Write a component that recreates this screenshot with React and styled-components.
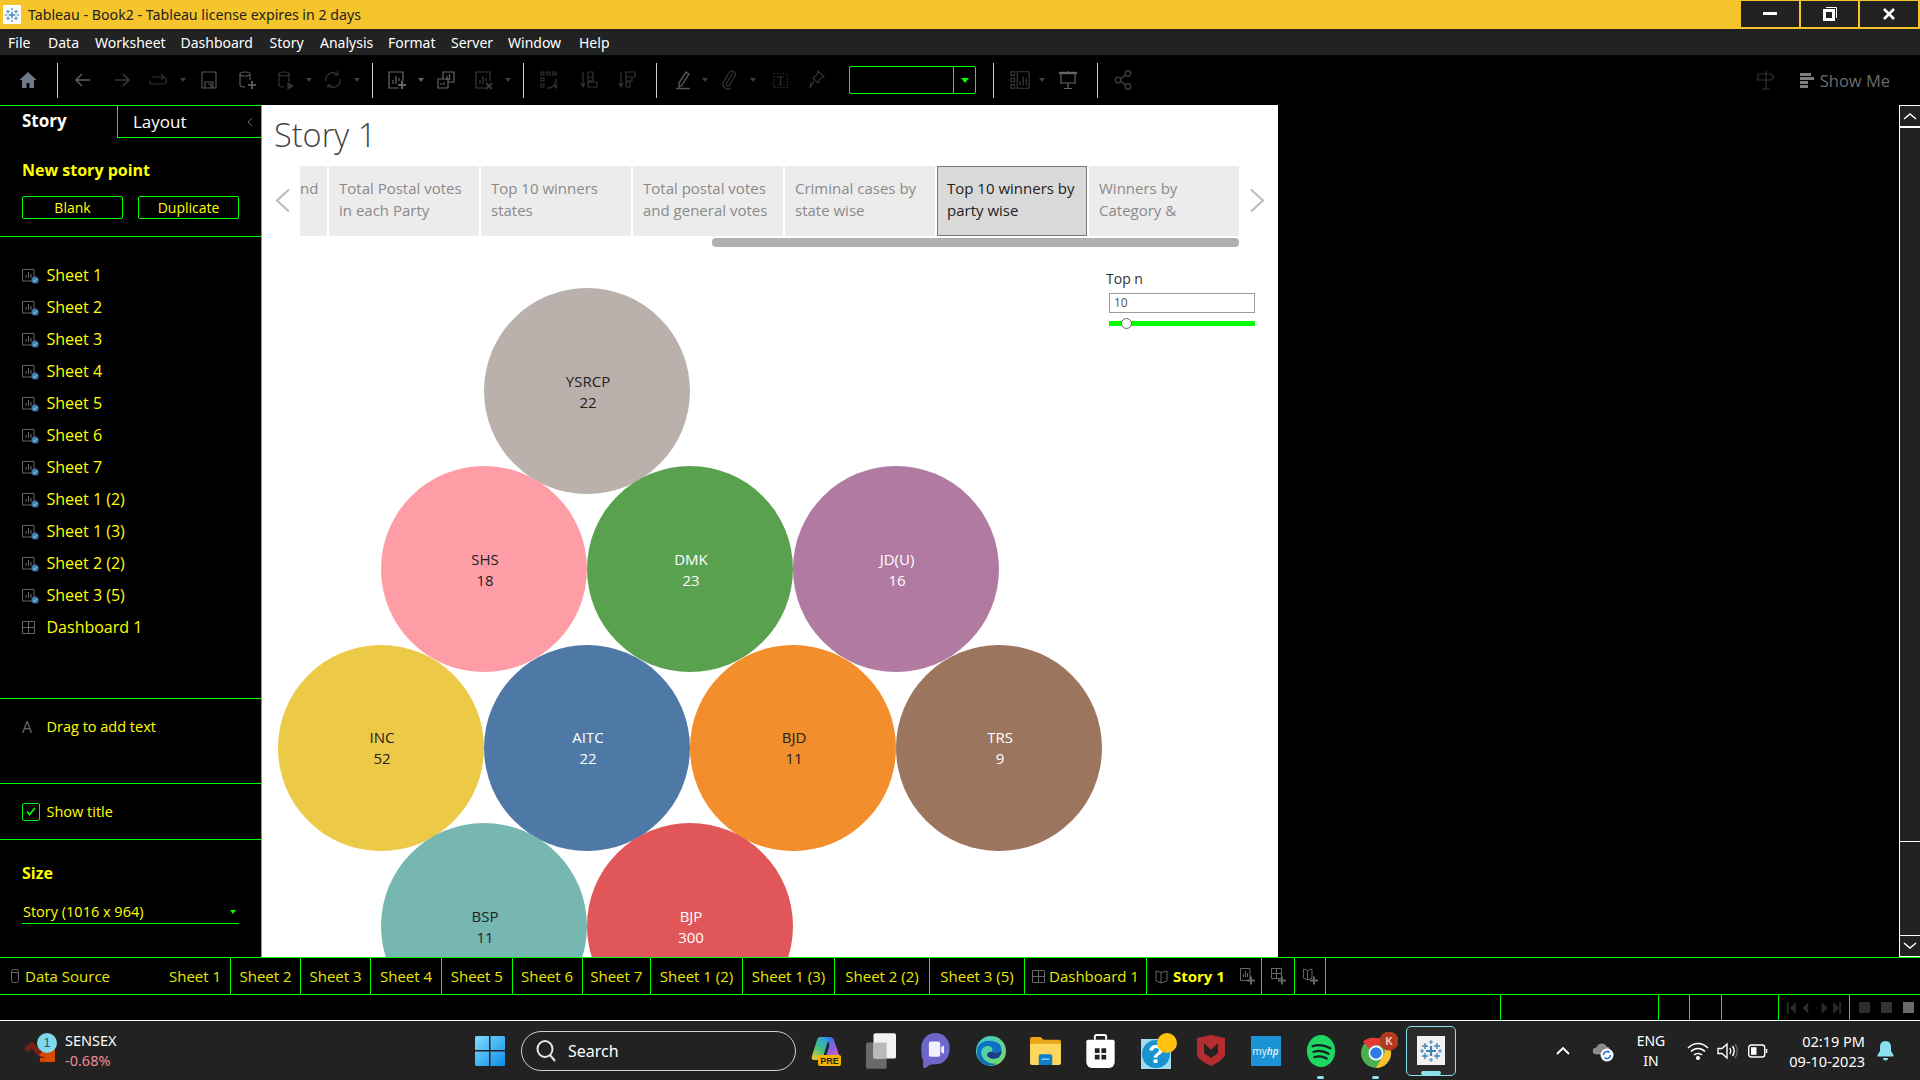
import styled, { createGlobalStyle } from "styled-components";

const GREEN = "#00ff00";
const YELLOW = "#ffff00";
const WIN_FONT = `"Noto Sans", "Open Sans", sans-serif`;
const TAB_FONT = `"Open Sans", "Noto Sans", sans-serif`;

const GlobalStyle = createGlobalStyle`
  html, body { margin: 0; padding: 0; background: #000; overflow: hidden; }
  * { box-sizing: border-box; }
`;

/* ---------- small drawings ---------- */
const Svg = ({ s = 20, vb = "0 0 20 20", children, ...rest }) => (
  <svg width={s} height={s} viewBox={vb} fill="none" stroke="currentColor" strokeWidth="1.2" {...rest}>
    {children}
  </svg>
);

const TableauMark = ({ s = 18 }) => (
  <svg width={s} height={s} viewBox="0 0 24 24" stroke="#3f86b8" strokeWidth="1.4">
    <path d="M12 7v10M7 12h10" strokeWidth="2.2" />
    <path d="M6 4v6M3 7h6M18 4v6M15 7h6M6 14v6M3 17h6M18 14v6M15 17h6" />
    <path d="M12 1v4M10 3h4M12 19v4M10 21h4M1 12h4M3 10v4M19 12h4M21 10v4" strokeWidth="1" />
  </svg>
);

const Home = () => (
  <svg width="20" height="20" viewBox="0 0 20 20" fill="currentColor">
    <path d="M10 2 1.5 10H4v8h4.5v-5h3v5H16v-8h2.5z" />
  </svg>
);
const Back = () => <Svg><path d="M17 10H3M9 4l-6 6 6 6" strokeWidth="1.6" /></Svg>;
const Forward = () => <Svg><path d="M3 10h14M11 4l6 6-6 6" strokeWidth="1.6" /></Svg>;
const Swap = () => <Svg><path d="M4 7h11a3 3 0 0 1 0 7H4a2 2 0 0 1-2-3M13 4l3 3-3 3" /></Svg>;
const Save = () => <Svg><path d="M3 2h14v16H3zM6 18v-6h8v6M9 14h3v4" /></Svg>;
const DataAdd = () => (
  <Svg>
    <ellipse cx="8" cy="4" rx="5" ry="2" />
    <path d="M3 4v11c0 1 2 2 5 2M13 4v6" />
    <path d="M11 15h8M15 11v8" strokeWidth="2" />
  </Svg>
);
const DataPause = () => (
  <Svg>
    <ellipse cx="8" cy="4" rx="5" ry="2" />
    <path d="M3 4v11c0 1 2 2 5 2M13 4v8" />
    <path d="M12 13l5 3-5 3z" fill="currentColor" />
  </Svg>
);
const Refresh = () => <Svg><path d="M3 11a7 7 0 0 1 12-6M17 9a7 7 0 0 1-12 6M15 1v4h-4M5 19v-4h4" /></Svg>;
const SheetAdd = () => (
  <Svg>
    <path d="M12 18H2V2h14v9M6 14V10M9 14V6M12 11V8" />
    <path d="M11 15h8M15 11v8" strokeWidth="2" />
  </Svg>
);
const Duplicate = () => (
  <Svg>
    <path d="M7 9V2h11v10h-6M2 9h10v9H2zM11 10V6M13.500 10V4M5 15v-2M8 15v-3" />
  </Svg>
);
const SheetClear = () => (
  <Svg>
    <path d="M12 18H2V2h14v9M6 14V10M9 14V6M12 11V8" />
    <path d="M12 13l6 6M18 13l-6 6" strokeWidth="1.8" />
  </Svg>
);
const Cycle = () => (
  <Svg>
    <path d="M2 2h3v3H2zM8 2h3v3H8zM14 2h3v3h-3zM2 8h3v3H2zM2 14h3v3H2zM8 18a8 8 0 0 0 9-9M15 15l2 3 1-4" />
  </Svg>
);
const SortAsc = () => (
  <Svg>
    <path d="M4 2v14M2 13l2 4 2-4M9 2h5v5H9zM9 7h5v4H9zM9 12h9v5H9z" />
  </Svg>
);
const SortDesc = () => (
  <Svg>
    <path d="M4 2v14M2 13l2 4 2-4M9 2h9v5H9zM9 7h6v4H9zM9 12h4v5H9z" />
  </Svg>
);
const Pen = () => (
  <Svg>
    <path d="M6 13 13 2l3 2-7 11-3 2zM3 18.500h14" strokeWidth="1.4" />
  </Svg>
);
const Clip = () => <Svg><path d="M14 3 7 14a2 2 0 0 0 3 2l6-10a3.500 3.500 0 0 0-6-3.500L4 13a5 5 0 0 0 8 5" /></Svg>;
const TextBox = () => (
  <Svg s={17} vb="0 0 20 20">
    <path d="M2 2h16v16H2z" strokeDasharray="2 1.500" />
    <path d="M6 6h8M10 6v9M8 15h4" />
  </Svg>
);
const Pin = () => <Svg><path d="M11 1l6 6-3 1-3 5-5-5 4-3zM7 11l-4 7 1-6" /></Svg>;
const Cards = () => (
  <Svg s={20} vb="0 0 22 20">
    <path d="M1 1h4v4H1zM1 8h4v4H1zM1 15h4v4H1zM8 1h13v18H8zM11 16v-5M14.500 16V6M18 16v-8" />
  </Svg>
);
const Present = () => (
  <Svg>
    <path d="M1 3h18" strokeWidth="2.400" />
    <path d="M3 3v10h14V3M10 1v2M10 13v5M6 18.500h8" />
  </Svg>
);
const Share = () => (
  <Svg>
    <circle cx="4" cy="10" r="2.800" />
    <circle cx="14" cy="3.500" r="2.800" />
    <circle cx="14" cy="16.500" r="2.800" />
    <path d="M6.500 8.500 12 5M6.500 11.500 12 15" />
  </Svg>
);
const Signpost = () => (
  <Svg>
    <path d="M10 1v18M6 19h8M2 4h13l3 3-3 3H2z" />
  </Svg>
);

const SheetIcon = () => (
  <SheetIconBox>
    <svg width="16" height="16" viewBox="0 0 16 16" fill="none" stroke="#666" strokeWidth="1">
      <path d="M.5 1.500h11.500v11.500H.5zM4 10V7M6.500 10V4M9 10V6" />
    </svg>
    <svg width="8" height="8" viewBox="0 0 8 8">
      <circle cx="4" cy="4" r="3.600" fill="#3a7ca5" />
      <path d="M2.300 4l1.200 1.200 2.200-2.200" stroke="#cfe" strokeWidth=".8" fill="none" />
    </svg>
  </SheetIconBox>
);
const GridIcon = ({ s = 13 }) => (
  <svg width={s} height={s} viewBox="0 0 13 13" fill="none" stroke="#666" strokeWidth="1">
    <path d="M.5.500h12v12H.5zM6.500.500v12M.5 6.500h12" />
  </svg>
);
const BookIcon = () => (
  <svg width="13" height="15" viewBox="0 0 13 15" fill="none" stroke="#666" strokeWidth="1">
    <path d="M1 2l5 1.500L12 2v10l-6 2-5-2zM6 3.500V14" />
  </svg>
);

/* taskbar pictures */
const StartLogo = () => (
  <svg width="30" height="30" viewBox="0 0 30 30">
    <defs>
      <linearGradient id="st" x1="0" y1="0" x2="1" y2="1">
        <stop offset="0" stopColor="#7fdcff" />
        <stop offset="1" stopColor="#0f8de8" />
      </linearGradient>
    </defs>
    <path d="M0 1.500A1.500 1.500 0 0 1 1.500 0H14v14H0zM15.500 0H28.500A1.500 1.500 0 0 1 30 1.500V14H15.500zM0 15.500h14V30H1.500A1.500 1.500 0 0 1 0 28.500zM15.500 15.500H30v13a1.500 1.500 0 0 1-1.500 1.500H15.500z" fill="url(#st)" />
  </svg>
);
const Copilot = () => (
  <svg width="30" height="30" viewBox="0 0 30 30">
    <defs>
      <linearGradient id="cpl" x1="0.8" y1="0" x2="0.2" y2="1">
        <stop offset="0" stopColor="#2f9be8" />
        <stop offset=".5" stopColor="#3fc08a" />
        <stop offset="1" stopColor="#e8c92f" />
      </linearGradient>
      <linearGradient id="cpr" x1="0.3" y1="0" x2="0.7" y2="1">
        <stop offset="0" stopColor="#2f7fe8" />
        <stop offset=".5" stopColor="#8a5fe0" />
        <stop offset="1" stopColor="#e85fc4" />
      </linearGradient>
    </defs>
    <path d="M9 1h6c2 0 3 1 2 4l-5 16c-1 2-2 3-4 3H3c-2 0-3-2-2-4L6 4c.6-2 1.500-3 3-3z" fill="url(#cpl)" />
    <path d="M14 1h5c2 0 3 1 4 3l5 15c1 3-1 5-3 5h-8c-2 0-3-2-2-4l3-9c.6-2 .6-3-.5-5-.8-2-2-3-3.500-5z" fill="url(#cpr)" />
    <rect x="7" y="19" width="23" height="11" rx="2" fill="#f7b500" />
    <text x="18.500" y="28" fontSize="9" fontWeight="700" fontFamily="Liberation Sans" textAnchor="middle" fill="#222">PRE</text>
  </svg>
);
const Stack = () => (
  <svg width="30" height="36" viewBox="0 0 32 38">
    <rect x="0" y="10" width="22" height="28" rx="2" fill="#6a6a6a" />
    <rect x="8" y="0" width="24" height="27" rx="2" fill="#f2f2f2" />
    <rect x="8" y="10" width="14" height="17" fill="#b9b9b9" />
  </svg>
);
const MeetIcon = () => (
  <svg width="29" height="36" viewBox="0 0 30 38">
    <path d="M15 0c8 0 15 6 15 16s-6 17-15 17c-3 0-6 0-8 2-2 2-5 3-5 0v-6C0 25 0 21 0 16 0 6 7 0 15 0z" fill="#6f66c9" />
    <path d="M8 11a2 2 0 0 1 2-2h8a2 2 0 0 1 2 2v12a2 2 0 0 1-2 2h-8a2 2 0 0 1-2-2zM21 15l3-2v9l-3-2z" fill="#f3f1ff" />
  </svg>
);
const EdgeIcon = () => (
  <svg width="30" height="30" viewBox="0 0 32 38" preserveAspectRatio="none">
    <defs>
      <linearGradient id="eg" x1="0" y1="0" x2="1" y2="1">
        <stop offset="0" stopColor="#39c7d6" />
        <stop offset="1" stopColor="#7cdc5f" />
      </linearGradient>
    </defs>
    <ellipse cx="16" cy="19" rx="16" ry="19" fill="url(#eg)" />
    <path d="M1 20C1 10 8 6 14 6c8 0 14 5 13 11-1 4-7 5-10 3 2-5-2-8-6-7-5 1-7 8-4 14 2 5 8 9 15 8-3 2-7 3-10 2C6 36 1 29 1 20z" fill="#0f6fc4" />
    <path d="M17 20c3 2 9 1 10-3 1 5-1 9-4 11-4 2-9 1-11-3-1-3 2-6 5-5z" fill="#1b3f8b" />
  </svg>
);
const FolderIcon = () => (
  <svg width="31" height="29" viewBox="0 0 32 30">
    <path d="M0 3a2 2 0 0 1 2-2h9l3 3h16a2 2 0 0 1 2 2v5H0z" fill="#e9a516" />
    <path d="M0 8h32v20a2 2 0 0 1-2 2H2a2 2 0 0 1-2-2z" fill="#ffd75e" />
    <path d="M9 21a2 2 0 0 1 2-2h10a2 2 0 0 1 2 2v9H9z" fill="#0f7fc9" />
    <path d="M12 24h8" stroke="#8fd0f5" strokeWidth="1.500" />
  </svg>
);
const StoreIcon = () => (
  <svg width="29" height="34" viewBox="0 0 30 36">
    <path d="M9 6V3a2 2 0 0 1 2-2h8a2 2 0 0 1 2 2v3" fill="none" stroke="#fff" strokeWidth="2" />
    <path d="M0 8a2 2 0 0 1 2-2h26a2 2 0 0 1 2 2v22a6 6 0 0 1-6 6H6a6 6 0 0 1-6-6z" fill="#fff" />
    <path d="M9 15h5v5H9zM16 15h5v5h-5zM9 22h5v5H9zM16 22h5v5h-5z" fill="#222" />
  </svg>
);
const HelpIcon = () => (
  <svg width="47" height="36" viewBox="-9 0 47 36">
    <rect x="0" y="6" width="30" height="30" fill="#9fdcf0" />
    <circle cx="15" cy="21" r="14" fill="#1994cf" />
    <text x="15" y="30" fontSize="26" fontWeight="700" fontFamily="Liberation Sans" textAnchor="middle" fill="#fff">?</text>
    <ellipse cx="26" cy="10" rx="10" ry="10" fill="#ffc20e" />
  </svg>
);
const McAfee = () => (
  <svg width="28" height="31" viewBox="0 0 28 31">
    <path d="M0 3 14 0l14 3v17c0 3-9 9-14 11C9 29 0 23 0 20z" fill="#b52d2f" />
    <path d="M7 8l7 7 7-7v10l-7 5-7-5z" fill="#222" />
  </svg>
);
const MyHp = () => (
  <MyHpBox>
    my<em>hp</em>
  </MyHpBox>
);
const Spotify = () => (
  <svg width="30" height="32" viewBox="0 0 30 34">
    <ellipse cx="15" cy="17" rx="15" ry="17" fill="#1ed760" />
    <path d="M6 12c6-2 13-1 19 2M7 18c5-2 11-1 16 2M8 23.500c4-1 9-1 13 1.500" stroke="#122" strokeWidth="2.400" fill="none" strokeLinecap="round" />
  </svg>
);
const Chrome = () => (
  <svg width="45.5" height="38" viewBox="-8 0 45.5 38">
    <circle cx="15" cy="21" r="15" fill="#4caf50" />
    <path d="M15 6a15 15 0 0 1 13 7.500H15a7.500 7.500 0 0 0-6.500 3.800L2 9.500A15 15 0 0 1 15 6z" fill="#e53935" />
    <path d="M28 13.500A15 15 0 0 1 15 36l6.500-11.300a7.500 7.500 0 0 0 0-11.200z" fill="#fbc02d" />
    <circle cx="15" cy="21" r="7.500" fill="#fff" />
    <circle cx="15" cy="21" r="5.800" fill="#2f7be5" />
    <circle cx="28" cy="9" r="9.500" fill="#b5391f" />
    <text x="28" y="12.500" fontSize="10" fontWeight="700" fontFamily="Liberation Sans" textAnchor="middle" fill="#f3d5c8">K</text>
  </svg>
);
const SensexIcon = () => (
  <svg width="34" height="36" viewBox="0 0 34 36">
    <path d="M1 17l6-5 9 10 5-4v-4" stroke="#7a2116" strokeWidth="5" fill="none" />
    <path d="M14 22l8-8 8 0v15H15v-4h5z" fill="#d94a00" />
    <circle cx="22" cy="10" r="10" fill="#7fd8ec" />
    <text x="22" y="14" fontSize="12" fontFamily="Liberation Sans" textAnchor="middle" fill="#27505c">1</text>
  </svg>
);
const CloudSync = () => (
  <svg width="24" height="22" viewBox="0 0 24 22">
    <path d="M5 15a4 4 0 0 1 0-8 6 6 0 0 1 11-1 4 4 0 0 1 2 7v2z" fill="#8a8a8a" stroke="#111" />
    <circle cx="16" cy="15" r="6.500" fill="#fff" />
    <path d="M12.500 15a3.500 3.500 0 0 1 6-2.500M19.500 15a3.500 3.500 0 0 1-6 2.500" stroke="#1b74d6" strokeWidth="1.600" fill="none" />
  </svg>
);

/* ---------- data ---------- */
const menus = [
  ["File", 8], ["Data", 48], ["Worksheet", 95], ["Dashboard", 180.5], ["Story", 269.5],
  ["Analysis", 320], ["Format", 388], ["Server", 451], ["Window", 508], ["Help", 579],
];

const Caret = () => <CaretMark />;
const Sep = () => <ToolSep />;
const Combo = () => (
  <ComboBox>
    <ComboValue />
    <ComboArrow><CaretMark $color={GREEN} $size={4} /></ComboArrow>
  </ComboBox>
);

const toolCentres = [
  [28, Home, "#6e7a88"], [57, Sep], [83, Back, "#5c5c5c"], [122, Forward, "#3a3a3a"], [158, Swap, "#333"],
  [183, Caret, "#3f3f3f"], [208.5, Save, "#555"], [247, DataAdd, "#555"], [286, DataPause, "#333"],
  [309, Caret, "#3f3f3f"], [332.5, Refresh, "#333"], [357, Caret, "#3f3f3f"], [372, Sep], [397, SheetAdd, "#666"],
  [421, Caret, "#666"], [446, Duplicate, "#666"], [484, SheetClear, "#3a3a3a"], [508, Caret, "#3f3f3f"], [523, Sep],
  [549, Cycle, "#333"], [589, SortAsc, "#333"], [627, SortDesc, "#333"], [656, Sep], [683, Pen, "#555"],
  [704.5, Caret, "#3f3f3f"], [729, Clip, "#333"], [753, Caret, "#3f3f3f"], [780, TextBox, "#333"], [817, Pin, "#333"],
  [912.5, Combo], [993, Sep], [1020, Cards, "#3f3f3f"], [1041.5, Caret, "#3f3f3f"], [1068, Present, "#666"],
  [1097, Sep], [1124, Share, "#444"],
];

// every slot is symmetric round its centre, the rest of the distance goes in a margin
let toolEdge = 0;
const tools = toolCentres.map(([c, Icon, color], i) => {
  const prev = i ? toolCentres[i - 1][0] : 0;
  const next = toolCentres[i + 1] ? toolCentres[i + 1][0] : c + 20;
  const half = Math.min(c - prev, next - c) / 2;
  const ml = c - half - toolEdge;
  toolEdge = c + half;
  return { Icon, color, w: half * 2, ml };
});

const storyPoints = [
  { text: "nd", w: 27, pad: 0 },
  { text: "Total Postal votes\nin each Party" },
  { text: "Top 10 winners\nstates" },
  { text: "Total postal votes\nand general votes" },
  { text: "Criminal cases by\nstate wise" },
  { text: "Top 10 winners by\nparty wise", active: true },
  { text: "Winners by\nCategory &" },
];

const sheets = ["Sheet 1", "Sheet 2", "Sheet 3", "Sheet 4", "Sheet 5", "Sheet 6", "Sheet 7", "Sheet 1 (2)", "Sheet 1 (3)", "Sheet 2 (2)", "Sheet 3 (5)"];

const bubbles = [
  { name: "YSRCP", value: 22, x: 222, y: 41, color: "#bab0ac", dark: true },
  { name: "SHS", value: 18, x: 119, y: 219, color: "#ff9da7", dark: true },
  { name: "DMK", value: 23, x: 325, y: 219, color: "#59a14f" },
  { name: "JD(U)", value: 16, x: 531, y: 219, color: "#b07aa1" },
  { name: "INC", value: 52, x: 16, y: 397.5, color: "#edc948", dark: true },
  { name: "AITC", value: 22, x: 222, y: 397.5, color: "#4e79a7" },
  { name: "BJD", value: 11, x: 428, y: 397.5, color: "#f28e2b", dark: true },
  { name: "TRS", value: 9, x: 634, y: 397.5, color: "#9c755f" },
  { name: "BSP", value: 11, x: 119, y: 576, color: "#76b7b2", dark: true },
  { name: "BJP", value: 300, x: 325, y: 576, color: "#e15759" },
];

const tabs = [
  ["Sheet 1", 71], ["Sheet 2", 70], ["Sheet 3", 70], ["Sheet 4", 71], ["Sheet 5", 70.5], ["Sheet 6", 70], ["Sheet 7", 68.5],
  ["Sheet 1 (2)", 92], ["Sheet 1 (3)", 92], ["Sheet 2 (2)", 95], ["Sheet 3 (5)", 95],
];

const statusCells = [1501, 158, 31, 32, 57];

const dockIcons = [Copilot, Stack, MeetIcon, EdgeIcon, FolderIcon, StoreIcon, HelpIcon, McAfee, MyHp, Spotify, Chrome];

export default function App() {
  return (
    <Page>
      <GlobalStyle />
      <TitleBar>
        <AppIcon><TableauMark s={16} /></AppIcon>
        <TitleText>Tableau - Book2 - Tableau license expires in 2 days</TitleText>
        <WindowButtons>
          <WindowButton $w={58}><svg width="14" height="4"><rect width="14" height="3" fill="#fff" /></svg></WindowButton>
          <WindowButton $w={57}>
            <svg width="14" height="14" viewBox="0 0 14 14" fill="none" stroke="#fff">
              <path d="M3 .5h10.500V11" strokeWidth="1" />
              <rect x="1.500" y="3.500" width="9" height="9" strokeWidth="3" />
            </svg>
          </WindowButton>
          <WindowButton $w={58}>
            <svg width="12" height="12" viewBox="0 0 12 12" stroke="#fff" strokeWidth="2.600"><path d="M1 1l10 10M11 1 1 11" /></svg>
          </WindowButton>
        </WindowButtons>
      </TitleBar>

      <MenuBar>
        {menus.map(([label, x], i) => (
          <MenuItem key={label} $w={(menus[i + 1] ? menus[i + 1][1] : x + 40) - x}>{label}</MenuItem>
        ))}
      </MenuBar>

      <Toolbar>
        {tools.map(({ Icon, color, w, ml }, i) => (
          <ToolSlot key={i} $w={w} $ml={ml} $color={color}>
            <Icon />
          </ToolSlot>
        ))}
        <ToolRight>
          <ToolSlot $w={30} $color="#333"><Signpost /></ToolSlot>
          <ShowMe>
            <BarsMark><i /><i /><i /><i /></BarsMark>
            Show Me
          </ShowMe>
        </ToolRight>
      </Toolbar>

      <Workspace>
        <Sidebar>
          <PaneTabs>
            <StoryTab>Story</StoryTab>
            <LayoutTab>
              Layout
              <svg width="6" height="10" viewBox="0 0 6 10" fill="none" stroke="#666"><path d="M5 1 1 5l4 4" /></svg>
            </LayoutTab>
          </PaneTabs>

          <NewPointSection>
            <SectionHeading>New story point</SectionHeading>
            <ButtonRow>
              <OutlineButton>Blank</OutlineButton>
              <OutlineButton>Duplicate</OutlineButton>
            </ButtonRow>
          </NewPointSection>

          <SheetList>
            {sheets.map((s) => (
              <SheetRow key={s}><SheetIcon />{s}</SheetRow>
            ))}
            <SheetRow><GridSlot><GridIcon /></GridSlot>Dashboard 1</SheetRow>
          </SheetList>

          <DragSection>
            <DragGlyph>A</DragGlyph>
            Drag to add text
          </DragSection>

          <ShowTitleSection>
            <CheckBox>
              <svg width="10" height="9" viewBox="0 0 10 9" fill="none" stroke={GREEN} strokeWidth="1.800"><path d="M1 4.500 3.500 7.500 9 1" /></svg>
            </CheckBox>
            Show title
          </ShowTitleSection>

          <SizeSection>
            <SectionHeading>Size</SectionHeading>
            <SizeSelect>
              Story (1016 x 964)
              <CaretMark $color={GREEN} $size={3} />
            </SizeSelect>
          </SizeSection>
        </Sidebar>

        <StoryPanel>
          <StoryTitle>Story 1</StoryTitle>
          <Navigator>
            <NavArrow>
              <svg width="16" height="25" viewBox="0 0 16 25" fill="none" stroke="#bdbdbd" strokeWidth="2.200"><path d="M14 1.500 2 12.500l12 11" /></svg>
            </NavArrow>
            <PointRow>
              {storyPoints.map((p) => (
                <PointBox key={p.text} $w={p.w ?? 150} $pad={p.pad ?? 10} $active={p.active}>{p.text}</PointBox>
              ))}
            </PointRow>
            <NavArrow>
              <svg width="16" height="25" viewBox="0 0 16 25" fill="none" stroke="#bdbdbd" strokeWidth="2.200"><path d="M2 1.500l12 11-12 11" /></svg>
            </NavArrow>
          </Navigator>
          <NavScroll><NavThumb /></NavScroll>

          <Canvas>
            {bubbles.map((b) => (
              <Bubble key={b.name} $x={b.x} $y={b.y} $color={b.color} $dark={b.dark}>
                <span>{b.name}</span>
                <span>{b.value}</span>
              </Bubble>
            ))}
            <Legend>
              <LegendTitle>Top n</LegendTitle>
              <LegendInput>10</LegendInput>
              <LegendSlider><LegendThumb /></LegendSlider>
            </Legend>
          </Canvas>
        </StoryPanel>

        <BlackSpace />

        <ScrollBar>
          <ScrollButton>
            <svg width="14" height="8" viewBox="0 0 14 8" fill="none" stroke="#fff" strokeWidth="1.500"><path d="M1 7l6-5 6 5" /></svg>
          </ScrollButton>
          <ScrollThumb />
          <ScrollTrack />
          <ScrollButton>
            <svg width="14" height="8" viewBox="0 0 14 8" fill="none" stroke="#fff" strokeWidth="1.500"><path d="M1 1l6 5 6-5" /></svg>
          </ScrollButton>
        </ScrollBar>
      </Workspace>

      <TabStrip>
        <DataSourceTab>
          <svg width="8" height="14" viewBox="0 0 8 14" fill="none" stroke="#666"><rect x=".5" y=".5" width="7" height="13" rx="2" /><path d="M.5 3.500h7" /></svg>
          Data Source
        </DataSourceTab>
        {tabs.map(([label, w]) => (
          <SheetTab key={label} $w={w}>{label}</SheetTab>
        ))}
        <SheetTab $w={122}><TabIcon><GridIcon /></TabIcon>Dashboard 1</SheetTab>
        <StoryTabItem>
          <BookIcon />
          <strong>Story 1</strong>
          <TabAdd><SmallAdd /></TabAdd>
        </StoryTabItem>
        <SheetTab $w={33}><SmallAdd grid /></SheetTab>
        <SheetTab $w={31}><SmallAdd book /></SheetTab>
      </TabStrip>

      <StatusBar>
        {statusCells.map((w, i) => (
          <StatusCell key={i} $w={w} />
        ))}
        <PagerCell>
          <svg width="54" height="12" viewBox="0 0 56 12" fill="#2a2a2a">
            <path d="M0 0h2v12H0zM9 0v12L3 6zM22 0v12l-6-6zM36 0v12l6-6zM48 0v12l6-6zM54 0h2v12h-2z" />
          </svg>
        </PagerCell>
        <ViewCell>
          <ViewDots />
          <ViewFilm />
          <ViewSolid />
        </ViewCell>
      </StatusBar>

      <Taskbar>
        <Widget>
          <SensexIcon />
          <WidgetText>
            <span>SENSEX</span>
            <WidgetValue>-0.68%</WidgetValue>
          </WidgetText>
        </Widget>
        <StartButton><StartLogo /></StartButton>
        <SearchBox>
          <svg width="22" height="24" viewBox="0 0 22 24" fill="none" stroke="#e6e6e6" strokeWidth="2"><ellipse cx="10" cy="10" rx="7.500" ry="8" /><path d="M15 16l5 6" /></svg>
          Search
        </SearchBox>
        <Dock>
          {dockIcons.map((Icon, i) => (
            <DockSlot key={i} $running={Icon === Spotify || Icon === Chrome}><Icon /></DockSlot>
          ))}
          <DockActive>
            <DockTile><TableauMark s={24} /></DockTile>
          </DockActive>
        </Dock>
        <Tray>
          <TrayItem $w={20}>
            <svg width="14" height="8" viewBox="0 0 14 8" fill="none" stroke="#fff" strokeWidth="1.800"><path d="M1 7l6-6 6 6" /></svg>
          </TrayItem>
          <TrayItem $w={24} $ml={18}><CloudSync /></TrayItem>
          <LangItem $w={36} $ml={18}><span>ENG</span><span>IN</span></LangItem>
          <TrayItem $w={22} $ml={18}>
            <svg width="22" height="18" viewBox="0 0 22 18" fill="none" stroke="#fff" strokeWidth="1.500">
              <path d="M1 6c6-6 14-6 20 0M4 9.500c4-4 10-4 14 0M7 13c2-2 6-2 8 0" />
              <circle cx="11" cy="16" r="1.300" fill="#fff" />
            </svg>
          </TrayItem>
          <TrayItem $w={22} $ml={8}>
            <svg width="22" height="18" viewBox="0 0 22 18" fill="none" stroke="#fff" strokeWidth="1.400">
              <path d="M1 6.500h4L10 2v14l-5-4.500H1z" />
              <path d="M13 6c1 2 1 4 0 6M15.500 4c2 3 2 7 0 10" />
              <path d="M18 2c3 4 3 10 0 14" stroke="#666" />
            </svg>
          </TrayItem>
          <TrayItem $w={22} $ml={8}>
            <svg width="20" height="14" viewBox="0 0 20 14" fill="none" stroke="#fff" strokeWidth="1.400">
              <rect x=".7" y="1" width="16" height="12" rx="2.500" />
              <rect x="3" y="3.200" width="5.500" height="7.600" fill="#fff" stroke="none" />
              <path d="M18.500 5v4" strokeWidth="1.600" />
            </svg>
          </TrayItem>
          <ClockItem>
            <span>02:19 PM</span>
            <span>09-10-2023</span>
          </ClockItem>
          <TrayItem $w={20} $ml={10}>
            <svg width="17" height="20" viewBox="0 0 17 20" fill="#8be0f0">
              <path d="M8.500 0C4.500 0 3 3 3 6v4L.5 14v1.500h16V14L14 10V6c0-3-1.500-6-5.500-6zM6 17h5a2.500 2.500 0 0 1-5 0z" />
            </svg>
          </TrayItem>
        </Tray>
      </Taskbar>
    </Page>
  );
}

function SmallAdd({ grid, book }) {
  return (
    <svg width="15" height="17" viewBox="0 0 15 17" fill="none" stroke="#666" strokeWidth="1">
      {grid ? (
        <path d="M.5.500h10v10H.5zM5.500.500v10M.5 5.500h10" />
      ) : book ? (
        <path d="M.5 1l4 1.500L9 1v9l-4.500 2-4-2zM4.500 2.500V12" />
      ) : (
        <path d="M.5.500h9.500v12H.5zM3.500 9V6M5.500 9V3M7.500 9V5" />
      )}
      <path d="M7 12.500h8M11 8.500v8" strokeWidth="2" />
    </svg>
  );
}

/* ---------- page frame ---------- */
const Page = styled.div`
  width: 1920px;
  height: 1080px;
  display: flex;
  flex-direction: column;
  background: #000;
  overflow: hidden;
  font-family: ${TAB_FONT};
`;

const TitleBar = styled.div`
  height: 29px;
  background: #f6c52b;
  display: flex;
  align-items: center;
  flex-shrink: 0;
`;

const AppIcon = styled.div`
  width: 18px;
  height: 19px;
  margin-left: 3px;
  background: #fff;
  display: flex;
  align-items: center;
  justify-content: center;
`;

const TitleText = styled.div`
  margin-left: 7px;
  font: 14.2px ${WIN_FONT};
  color: #222;
`;

const WindowButtons = styled.div`
  margin-left: auto;
  margin-right: 2px;
  height: 100%;
  padding: 1px 0 2px;
  display: flex;
  gap: 2px;
`;

const WindowButton = styled.div`
  width: ${(p) => p.$w}px;
  background: #222;
  display: flex;
  align-items: center;
  justify-content: center;
`;

const MenuBar = styled.div`
  height: 26px;
  padding-left: 8px;
  background: #222;
  display: flex;
  align-items: center;
  flex-shrink: 0;
`;

const MenuItem = styled.div`
  width: ${(p) => p.$w}px;
  font: 14px ${WIN_FONT};
  color: #fff;
`;

const Toolbar = styled.div`
  height: 50px;
  background: #000;
  display: flex;
  align-items: center;
  flex-shrink: 0;
`;

const ToolSlot = styled.div`
  width: ${(p) => p.$w}px;
  margin-left: ${(p) => p.$ml || 0}px;
  flex-shrink: 0;
  display: flex;
  align-items: center;
  justify-content: center;
  color: ${(p) => p.$color || "#555"};
`;

const ToolSep = styled.div`
  width: 1px;
  height: 35px;
  flex-shrink: 0;
  background: #d0d0d0;
`;

const CaretMark = styled.span`
  width: 0;
  height: 0;
  flex-shrink: 0;
  border-left: ${(p) => p.$size || 3}px solid transparent;
  border-right: ${(p) => p.$size || 3}px solid transparent;
  border-top: ${(p) => (p.$size || 3) + 1}px solid ${(p) => p.$color || "currentColor"};
`;

const ComboBox = styled.div`
  width: 127px;
  height: 28px;
  flex-shrink: 0;
  display: flex;
  border: 1.5px solid ${GREEN};
  border-radius: 2px;
`;

const ComboValue = styled.div`
  flex: 1;
  border-right: 1px solid ${GREEN};
`;

const ComboArrow = styled.div`
  width: 21px;
  display: flex;
  align-items: center;
  justify-content: center;
`;

const ToolRight = styled.div`
  margin-left: auto;
  padding-right: 30px;
  display: flex;
  align-items: center;
  gap: 19px;
`;

const ShowMe = styled.div`
  display: flex;
  align-items: center;
  gap: 6px;
  font-size: 16.5px;
  color: #6b6b6b;
`;

const BarsMark = styled.div`
  width: 14px;
  display: flex;
  flex-direction: column;
  gap: 1px;

  i {
    display: block;
    height: 3px;
    background: #808080;
  }
  i:nth-child(1) { width: 11px; }
  i:nth-child(2) { width: 14px; }
  i:nth-child(3) { width: 8px; }
  i:nth-child(4) { width: 8px; }
`;

const Workspace = styled.div`
  flex: 1;
  min-height: 0;
  display: flex;
`;

/* ---------- side pane ---------- */
const Sidebar = styled.aside`
  width: 262px;
  flex-shrink: 0;
  display: flex;
  flex-direction: column;
  border-top: 1px solid ${GREEN};
  border-right: 1px solid ${GREEN};
  color: ${YELLOW};
`;

const PaneTabs = styled.div`
  height: 32px;
  display: flex;
  flex-shrink: 0;
`;

const StoryTab = styled.div`
  width: 117px;
  padding: 3px 0 0 22px;
  font-size: 17px;
  font-weight: 700;
  color: #fff;
`;

const LayoutTab = styled.div`
  flex: 1;
  padding: 0 8px 0 15px;
  display: flex;
  align-items: center;
  justify-content: space-between;
  border-left: 1px solid ${GREEN};
  border-bottom: 1px solid ${GREEN};
  font-size: 17px;
  color: #fff;
`;

const NewPointSection = styled.section`
  height: 99px;
  flex-shrink: 0;
  padding: 21px 22px 0;
  border-bottom: 1px solid ${GREEN};
`;

const SectionHeading = styled.div`
  font-size: 16px;
  line-height: 22px;
  font-weight: 700;
  color: ${YELLOW};
`;

const ButtonRow = styled.div`
  margin-top: 15px;
  display: flex;
  gap: 15px;
`;

const OutlineButton = styled.div`
  width: 101px;
  height: 23px;
  display: flex;
  align-items: center;
  justify-content: center;
  border: 1px solid ${GREEN};
  border-radius: 2px;
  font-size: 14px;
`;

const SheetList = styled.section`
  height: 462px;
  flex-shrink: 0;
  padding: 22px 22px 0;
  border-bottom: 1px solid ${GREEN};
`;

const SheetRow = styled.div`
  height: 32px;
  display: flex;
  align-items: center;
  font-size: 16px;
`;

const SheetIconBox = styled.span`
  position: relative;
  width: 24.5px;
  height: 16px;
  flex-shrink: 0;

  svg:last-child {
    position: absolute;
    left: 9px;
    top: 9px;
  }
`;

const GridSlot = styled.span`
  width: 24.5px;
  display: flex;
  flex-shrink: 0;
`;

const DragSection = styled.section`
  height: 85px;
  flex-shrink: 0;
  padding: 17px 22px 0;
  display: flex;
  align-items: flex-start;
  border-bottom: 1px solid ${GREEN};
  font-size: 14.5px;
  line-height: 22px;
`;

const DragGlyph = styled.span`
  width: 24.5px;
  color: #666;
  font-size: 16px;
`;

const ShowTitleSection = styled.section`
  height: 56px;
  flex-shrink: 0;
  padding: 0 22px;
  display: flex;
  align-items: center;
  border-bottom: 1px solid ${GREEN};
  font-size: 14.5px;
`;

const CheckBox = styled.span`
  width: 18px;
  height: 18px;
  margin-right: 6.5px;
  display: flex;
  align-items: flex-start;
  justify-content: center;
  padding-top: 3px;
  border: 1px solid ${GREEN};
  border-radius: 2px;
`;

const SizeSection = styled.section`
  padding: 22px 22px 0;
`;

const SizeSelect = styled.div`
  margin-top: 16px;
  height: 24px;
  display: flex;
  align-items: center;
  justify-content: space-between;
  padding: 0 3px 0 1px;
  border-bottom: 1px solid ${GREEN};
  font-size: 14.5px;
`;

/* ---------- story canvas ---------- */
const StoryPanel = styled.main`
  width: 1016px;
  flex-shrink: 0;
  background: #fff;
  display: flex;
  flex-direction: column;
  overflow: hidden;
`;

const StoryTitle = styled.h1`
  height: 61px;
  margin: 0;
  padding: 9px 0 0 12px;
  font-size: 32.5px;
  line-height: 42px;
  font-weight: 300;
  color: #444;
`;

const Navigator = styled.div`
  height: 70px;
  flex-shrink: 0;
  display: flex;
  align-items: center;
`;

const NavArrow = styled.div`
  width: 38px;
  flex-shrink: 0;
  display: flex;
  justify-content: center;
  padding-left: 3px;
  margin-top: -2px;

  &:last-child {
    width: 35px;
    padding-left: 0;
  }
`;

const PointRow = styled.div`
  display: flex;
  gap: 2px;
`;

const PointBox = styled.div`
  width: ${(p) => p.$w}px;
  height: 70px;
  overflow: hidden;
  white-space: pre;
  font-size: 15px;
  line-height: 22px;
  color: ${(p) => (p.$active ? "#222" : "#8a8a8a")};
  background: ${(p) => (p.$active ? "#d9d9d9" : "#ececec")};
  border: ${(p) => (p.$active ? "1px solid #777" : "none")};
  padding-left: ${(p) => (p.$active ? p.$pad - 1 : p.$pad)}px;
  padding-top: ${(p) => (p.$active ? 10 : 11)}px;
`;

const NavScroll = styled.div`
  height: 9px;
  margin-top: 2px;
  flex-shrink: 0;
  padding-left: 450px;
`;

const NavThumb = styled.div`
  width: 527px;
  height: 9px;
  border-radius: 4px;
  background: #b0b0b0;
`;

const Canvas = styled.div`
  position: relative;
  flex: 1;
`;

const Bubble = styled.div`
  position: absolute;
  left: ${(p) => p.$x}px;
  top: ${(p) => p.$y}px;
  width: 206px;
  height: 206px;
  padding: 1px 0 0 2px;
  border-radius: 50%;
  background: ${(p) => p.$color};
  color: ${(p) => (p.$dark ? "#222" : "#fff")};
  display: flex;
  flex-direction: column;
  align-items: center;
  justify-content: center;
  font-size: 15px;
  line-height: 21px;
`;

const Legend = styled.div`
  position: absolute;
  left: 844px;
  top: 21px;
  width: 149px;
`;

const LegendTitle = styled.div`
  height: 22px;
  font-size: 14px;
  line-height: 22px;
  color: #333;
`;

const LegendInput = styled.div`
  width: 146px;
  height: 20px;
  margin: 3px 0 0 3px;
  padding-left: 4px;
  border: 1px solid #9a9a9a;
  font-size: 12px;
  line-height: 18px;
  color: #555;
`;

const LegendSlider = styled.div`
  position: relative;
  width: 146px;
  height: 5px;
  margin: 8px 0 0 3px;
  background: ${GREEN};
`;

const LegendThumb = styled.span`
  position: absolute;
  left: 12px;
  top: -3px;
  width: 11px;
  height: 11px;
  border-radius: 50%;
  border: 1px solid #666;
  background: #fff;
`;

const BlackSpace = styled.div`
  flex: 1;
`;

const ScrollBar = styled.div`
  width: 21px;
  flex-shrink: 0;
  display: flex;
  flex-direction: column;
  border: 1px solid #fff;
  border-right: none;
  background: #222;
`;

const ScrollButton = styled.div`
  height: 20px;
  flex-shrink: 0;
  display: flex;
  align-items: center;
  justify-content: center;
`;

const ScrollThumb = styled.div`
  height: 716px;
  flex-shrink: 0;
  border-top: 2px solid #fff;
  border-bottom: 1px solid #fff;
`;

const ScrollTrack = styled.div`
  flex: 1;
  border-bottom: 1px solid #fff;
`;

/* ---------- sheet tabs ---------- */
const TabStrip = styled.div`
  height: 38px;
  flex-shrink: 0;
  display: flex;
  border-top: 1px solid ${GREEN};
  border-bottom: 1px solid ${GREEN};
  color: #e8e800;
  font-size: 15px;
`;

const DataSourceTab = styled.div`
  width: 160px;
  padding-left: 11px;
  display: flex;
  align-items: center;
  gap: 6px;
`;

const SheetTab = styled.div`
  width: ${(p) => p.$w}px;
  flex-shrink: 0;
  display: flex;
  align-items: center;
  justify-content: center;
  border-right: 1px solid ${GREEN};
  white-space: nowrap;
`;

const TabIcon = styled.span`
  display: flex;
  margin-right: 4px;
`;

const StoryTabItem = styled(SheetTab)`
  width: 115px;
  justify-content: flex-start;
  padding-left: 8px;
  gap: 5px;

  strong {
    color: ${YELLOW};
  }
`;

const TabAdd = styled.span`
  display: flex;
  margin-left: auto;
  margin-right: 6px;
`;

const StatusBar = styled.div`
  height: 25px;
  flex-shrink: 0;
  display: flex;
`;

const StatusCell = styled.div`
  width: ${(p) => p.$w}px;
  flex-shrink: 0;
  border-right: 1px solid ${GREEN};
`;

const PagerCell = styled.div`
  width: 71px;
  flex-shrink: 0;
  display: flex;
  align-items: center;
  justify-content: center;
  border-right: 1px solid ${GREEN};
`;

const ViewCell = styled.div`
  flex: 1;
  display: flex;
  align-items: center;
  justify-content: flex-end;
  gap: 11px;
  padding-right: 6px;
`;

const ViewDots = styled.span`
  width: 11px;
  height: 11px;
  background: #2d2d2d;
`;

const ViewFilm = styled.span`
  width: 11px;
  height: 11px;
  background: #333;
`;

const ViewSolid = styled.span`
  width: 11px;
  height: 11px;
  background: #6a6a6a;
`;

/* ---------- windows taskbar ---------- */
const Taskbar = styled.div`
  height: 60px;
  flex-shrink: 0;
  display: flex;
  align-items: center;
  background: #222;
  border-top: 1px solid #fff;
  font-family: ${WIN_FONT};
  color: #fff;
`;

const Widget = styled.div`
  width: 475px;
  flex-shrink: 0;
  padding-left: 25px;
  display: flex;
  align-items: center;
  gap: 6px;
`;

const WidgetText = styled.div`
  display: flex;
  flex-direction: column;
  margin-top: -2px;
  font-size: 14.5px;
  line-height: 20px;
`;

const WidgetValue = styled.span`
  color: #f08a98;
`;

const StartButton = styled.div`
  width: 30px;
  flex-shrink: 0;
  display: flex;
`;

const SearchBox = styled.div`
  width: 275px;
  height: 40px;
  margin-left: 16px;
  padding-left: 13px;
  display: flex;
  align-items: center;
  gap: 11px;
  border: 1px solid #cfcfcf;
  border-radius: 20px;
  font-size: 16px;
`;

const Dock = styled.div`
  margin-left: 2px;
  display: flex;
  align-items: center;
`;

const DockSlot = styled.div`
  position: relative;
  width: 55px;
  height: 46px;
  display: flex;
  align-items: center;
  justify-content: center;

  &::after {
    content: "";
    display: ${(p) => (p.$running ? "block" : "none")};
    position: absolute;
    left: 24px;
    bottom: -5px;
    width: 7px;
    height: 3px;
    border-radius: 2px;
    background: #8be0f0;
  }
`;

const DockActive = styled.div`
  position: relative;
  width: 50px;
  height: 50px;
  margin-left: 3px;
  display: flex;
  align-items: center;
  justify-content: center;
  border: 1px solid #8be0f0;
  border-radius: 5px;
  background: #2b2b2b;

  &::after {
    content: "";
    position: absolute;
    left: 14px;
    bottom: 0;
    width: 20px;
    height: 4px;
    border-radius: 2px;
    background: #8be0f0;
  }
`;

const DockTile = styled.div`
  width: 28px;
  height: 29px;
  display: flex;
  align-items: center;
  justify-content: center;
  background: #f1f1f1;
`;

const MyHpBox = styled.div`
  width: 30px;
  height: 30px;
  display: flex;
  align-items: center;
  justify-content: center;
  background: #1b93d6;
  color: #e6f4fb;
  font-size: 10px;

  em {
    font-weight: 600;
  }
`;

const Tray = styled.div`
  margin-left: auto;
  padding-right: 25px;
  display: flex;
  align-items: center;
`;

const TrayItem = styled.div`
  width: ${(p) => p.$w}px;
  margin-left: ${(p) => p.$ml || 0}px;
  flex-shrink: 0;
  display: flex;
  align-items: center;
  justify-content: center;
`;

const LangItem = styled(TrayItem)`
  flex-direction: column;
  font-size: 14px;
  line-height: 20px;
`;

const ClockItem = styled.div`
  width: 90px;
  margin-left: 6px;
  display: flex;
  flex-direction: column;
  align-items: flex-end;
  font-size: 14.5px;
  line-height: 20px;
  white-space: nowrap;
`;
